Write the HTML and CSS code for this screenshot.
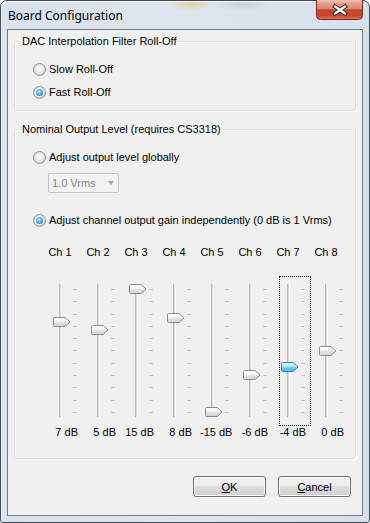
FILE: index.html
```html
<html>
<head>
    <link rel="stylesheet" href="styles.css">
</head>
<body>
<svg class="defs" width="0" height="0">
    <defs>
        <linearGradient id="thumb-fill" x1="0" y1="0" x2="0" y2="1">
            <stop offset="0" stop-color="#ffffff"/>
            <stop offset="0.45" stop-color="#f3f3f3"/>
            <stop offset="0.55" stop-color="#e3e3e3"/>
            <stop offset="1" stop-color="#d3d3d3"/>
        </linearGradient>
        <linearGradient id="thumb-hot" x1="0" y1="0" x2="0" y2="1">
            <stop offset="0" stop-color="#e9f8fe"/>
            <stop offset="0.45" stop-color="#b3e6fb"/>
            <stop offset="0.55" stop-color="#6fd0f7"/>
            <stop offset="1" stop-color="#3fb8ec"/>
        </linearGradient>
        <linearGradient id="close-fill" x1="0" y1="0" x2="0" y2="1">
            <stop offset="0" stop-color="#eab3a5"/>
            <stop offset="0.45" stop-color="#d98570"/>
            <stop offset="0.5" stop-color="#c7482c"/>
            <stop offset="0.8" stop-color="#c9462a"/>
            <stop offset="1" stop-color="#e27c5a"/>
        </linearGradient>
        <symbol id="thumb" viewBox="0 0 18 10">
            <path d="M1.5 0.5 H12 L17 5 L12 9.5 H1.5 Q0.5 9.5 0.5 8.5 V1.5 Q0.5 0.5 1.5 0.5 Z"/>
        </symbol>
    </defs>
</svg>

<div class="window">
    <div class="titlebar">
        <span class="title">Board Configuration</span>
        <svg class="close" width="47" height="20" viewBox="0 0 47 20">
            <path d="M0.5 0 V15.5 Q0.5 19.5 4.5 19.5 H42.5 Q46.5 19.5 46.5 15.5 V0" fill="url(#close-fill)" stroke="#7a2b1f"/>
            <path d="M1.5 1 H45.5" stroke="#f3c9bd" stroke-width="1"/>
            <path d="M19 6.5 L29 13.5 M29 6.5 L19 13.5" stroke="#3b2a28" stroke-width="4.2" stroke-linecap="square"/>
            <path d="M19 6.5 L29 13.5 M29 6.5 L19 13.5" stroke="#ffffff" stroke-width="2.2" stroke-linecap="square"/>
        </svg>
    </div>

    <div class="client">
        <fieldset class="group first">
            <legend>DAC Interpolation Filter Roll-Off</legend>
            <div class="radio-row"><span class="radio"></span>Slow Roll-Off</div>
            <div class="radio-row second"><span class="radio on"></span>Fast Roll-Off</div>
        </fieldset>

        <fieldset class="group level">
            <legend>Nominal Output Level (requires CS3318)</legend>
            <div class="radio-row"><span class="radio"></span>Adjust output level globally</div>
            <div class="combo">1.0 Vrms<span class="arrow"></span></div>
            <div class="radio-row third"><span class="radio on"></span>Adjust channel output gain independently (0 dB is 1 Vrms)</div>

            <div class="channels">
                <div class="ch">
                    <div class="ch-name">Ch 1</div>
                    <div class="slider">
                        <div class="track"></div>
                        <div class="ticks"><i></i><i></i><i></i><i></i><i></i><i></i><i></i><i></i><i></i><i></i><i></i></div>
                        <svg class="thumb" style="top:41px"><use href="#thumb"/></svg>
                    </div>
                    <div class="ch-val">7 dB</div>
                </div>
                <div class="ch">
                    <div class="ch-name">Ch 2</div>
                    <div class="slider">
                        <div class="track"></div>
                        <div class="ticks"><i></i><i></i><i></i><i></i><i></i><i></i><i></i><i></i><i></i><i></i><i></i></div>
                        <svg class="thumb" style="top:49px"><use href="#thumb"/></svg>
                    </div>
                    <div class="ch-val">5 dB</div>
                </div>
                <div class="ch">
                    <div class="ch-name">Ch 3</div>
                    <div class="slider">
                        <div class="track"></div>
                        <div class="ticks"><i></i><i></i><i></i><i></i><i></i><i></i><i></i><i></i><i></i><i></i><i></i></div>
                        <svg class="thumb" style="top:8px"><use href="#thumb"/></svg>
                    </div>
                    <div class="ch-val">15 dB</div>
                </div>
                <div class="ch">
                    <div class="ch-name">Ch 4</div>
                    <div class="slider">
                        <div class="track"></div>
                        <div class="ticks"><i></i><i></i><i></i><i></i><i></i><i></i><i></i><i></i><i></i><i></i><i></i></div>
                        <svg class="thumb" style="top:37px"><use href="#thumb"/></svg>
                    </div>
                    <div class="ch-val">8 dB</div>
                </div>
                <div class="ch">
                    <div class="ch-name">Ch 5</div>
                    <div class="slider">
                        <div class="track"></div>
                        <div class="ticks"><i></i><i></i><i></i><i></i><i></i><i></i><i></i><i></i><i></i><i></i><i></i></div>
                        <svg class="thumb" style="top:131px"><use href="#thumb"/></svg>
                    </div>
                    <div class="ch-val">-15 dB</div>
                </div>
                <div class="ch">
                    <div class="ch-name">Ch 6</div>
                    <div class="slider">
                        <div class="track"></div>
                        <div class="ticks"><i></i><i></i><i></i><i></i><i></i><i></i><i></i><i></i><i></i><i></i><i></i></div>
                        <svg class="thumb" style="top:94px"><use href="#thumb"/></svg>
                    </div>
                    <div class="ch-val">-6 dB</div>
                </div>
                <div class="ch">
                    <div class="ch-name">Ch 7</div>
                    <div class="slider focus hot">
                        <div class="track"></div>
                        <div class="ticks"><i></i><i></i><i></i><i></i><i></i><i></i><i></i><i></i><i></i><i></i><i></i></div>
                        <svg class="thumb" style="top:86px"><use href="#thumb"/></svg>
                    </div>
                    <div class="ch-val">-4 dB</div>
                </div>
                <div class="ch">
                    <div class="ch-name">Ch 8</div>
                    <div class="slider">
                        <div class="track"></div>
                        <div class="ticks"><i></i><i></i><i></i><i></i><i></i><i></i><i></i><i></i><i></i><i></i><i></i></div>
                        <svg class="thumb" style="top:70px"><use href="#thumb"/></svg>
                    </div>
                    <div class="ch-val">0 dB</div>
                </div>
            </div>
        </fieldset>

        <div class="buttons">
            <button class="btn"><u>O</u>K</button>
            <button class="btn"><u>C</u>ancel</button>
        </div>
    </div>
</div>
</body>
</html>
```

FILE: styles.css
```css
body {
    margin: 0;
    width: 370px;
    height: 523px;
    overflow: hidden;
    background: #ffffff;
    font-family: "Liberation Sans", Arial, sans-serif;
    font-size: 11px;
    color: #000;
}
.defs {position: absolute; width: 0; height: 0;}

/* window frame */
.window {
    box-sizing: border-box;
    width: 370px;
    height: 523px;
    padding: 0 6px 6px;
    display: flex;
    flex-direction: column;
    border: 1px solid #3d4b5a;
    border-radius: 7px 7px 3px 3px;
    background:
        radial-gradient(ellipse 26px 9px at 190px 2px, rgba(240, 196, 110, 0.55), transparent),
        radial-gradient(ellipse 30px 8px at 240px 3px, rgba(170, 180, 190, 0.35), transparent),
        linear-gradient(to right, #d3dde8 0, #dfe7f0 3px, #d9e2ec 6px, #dde6ef 50%, #d6e0ea 100%);
    box-shadow: inset 1px 1px 0 rgba(255, 255, 255, 0.7);
}
.titlebar {
    height: 28px;
    display: flex;
    justify-content: space-between;
    align-items: flex-start;
}
.title {
    margin: 8px 0 0 1px;
    font-family: "Noto Sans", "Open Sans", sans-serif;
    font-size: 12px;
    line-height: 14px;
    color: #000;
}
.close {
    display: block;
    margin-top: -1px;
}

.client {
    flex: 1;
    box-sizing: border-box;
    padding: 0 6px;
    background: #f0f0f0;
    border: 1px solid #707e8b;
}

/* group boxes */
.group {
    margin: 5px 0 0;
    padding: 15px 0 11px 18px;
    border: 1px solid #d5dfe5;
    border-radius: 3px;
    box-shadow: inset 1px 1px 0 #fff, 1px 1px 0 #fff;
}
.group legend {
    margin-left: -13px;
    padding: 0 2px;
    line-height: 13px;
}
.group.level {
    margin-top: 12px;
    padding-bottom: 19px;
}

.radio-row {
    display: flex;
    align-items: center;
    gap: 3px;
    height: 13px;
    line-height: 13px;
    white-space: nowrap;
}
.radio-row.second {margin-top: 10px;}
.radio-row.third {margin-top: 21px;}
.radio {
    box-sizing: border-box;
    width: 13px;
    height: 13px;
    flex: none;
    display: flex;
    align-items: center;
    justify-content: center;
    border: 1px solid #8e8f8f;
    border-radius: 50%;
    background: radial-gradient(circle at 50% 45%, #ffffff 0, #f2f2f2 35%, #d4d4d4 80%, #ececec 100%);
}
.radio.on::after {
    content: "";
    width: 7px;
    height: 7px;
    border-radius: 50%;
    background: radial-gradient(circle at 45% 40%, #b9ecff 0, #4db2ee 45%, #1b5c9f 100%);
    box-shadow: 0 0 0 1px rgba(255, 255, 255, 0.6);
}

/* disabled combo box */
.combo {
    box-sizing: border-box;
    width: 71px;
    height: 20px;
    margin: 9px 0 0 15px;
    padding-left: 3px;
    display: flex;
    align-items: center;
    justify-content: space-between;
    color: #838383;
    border: 1px solid #c3c6c9;
    border-radius: 2px;
    background: #f3f3f3;
}
.combo .arrow {
    width: 0;
    height: 0;
    margin-right: 4px;
    border-left: 3.5px solid transparent;
    border-right: 3.5px solid transparent;
    border-top: 4px solid #a3a3a3;
}

/* channel sliders */
.channels {
    display: flex;
    margin: 19px 0 0 15px;
}
.ch {
    width: 38px;
    display: flex;
    flex-direction: column;
}
.ch-name {
    width: 24px;
    text-align: center;
    line-height: 13px;
    white-space: nowrap;
}
.slider {
    position: relative;
    width: 32px;
    height: 150px;
    margin: 17px 0 0 3px;
}
.slider.focus {
    outline: 1px dotted #000;
    outline-offset: -1px;
}
.track {
    position: absolute;
    left: 8px;
    top: 8px;
    width: 3px;
    height: 133px;
    background: linear-gradient(to right, #b9b9b9 0 1px, #dadada 1px 2px, #fdfdfd 2px);
}
.ticks {
    position: absolute;
    left: 22px;
    top: 13px;
    width: 4px;
    height: 124px;
    display: flex;
    flex-direction: column;
    justify-content: space-between;
}
.ticks i {height: 1px; background: #c4c4c4;}
.thumb {
    position: absolute;
    left: 2px;
    width: 18px;
    height: 10px;
    fill: url(#thumb-fill);
    stroke: #8a8a8a;
}
.hot .thumb {
    fill: url(#thumb-hot);
    stroke: #3c7fb1;
}
.ch-val {
    width: 30px;
    text-align: right;
    line-height: 13px;
    white-space: nowrap;
}

/* dialog buttons */
.buttons {
    display: flex;
    justify-content: flex-end;
    gap: 12px;
    margin: 17px 5px 0 0;
}
.btn {
    box-sizing: border-box;
    width: 73px;
    height: 21px;
    padding: 0;
    font: inherit;
    color: #000;
    border: 1px solid #707070;
    border-radius: 3px;
    background: linear-gradient(#f2f2f2 0, #ebebeb 50%, #dddddd 50%, #cfcfcf 100%);
    box-shadow: inset 0 0 0 1px #fcfcfc;
}
```
